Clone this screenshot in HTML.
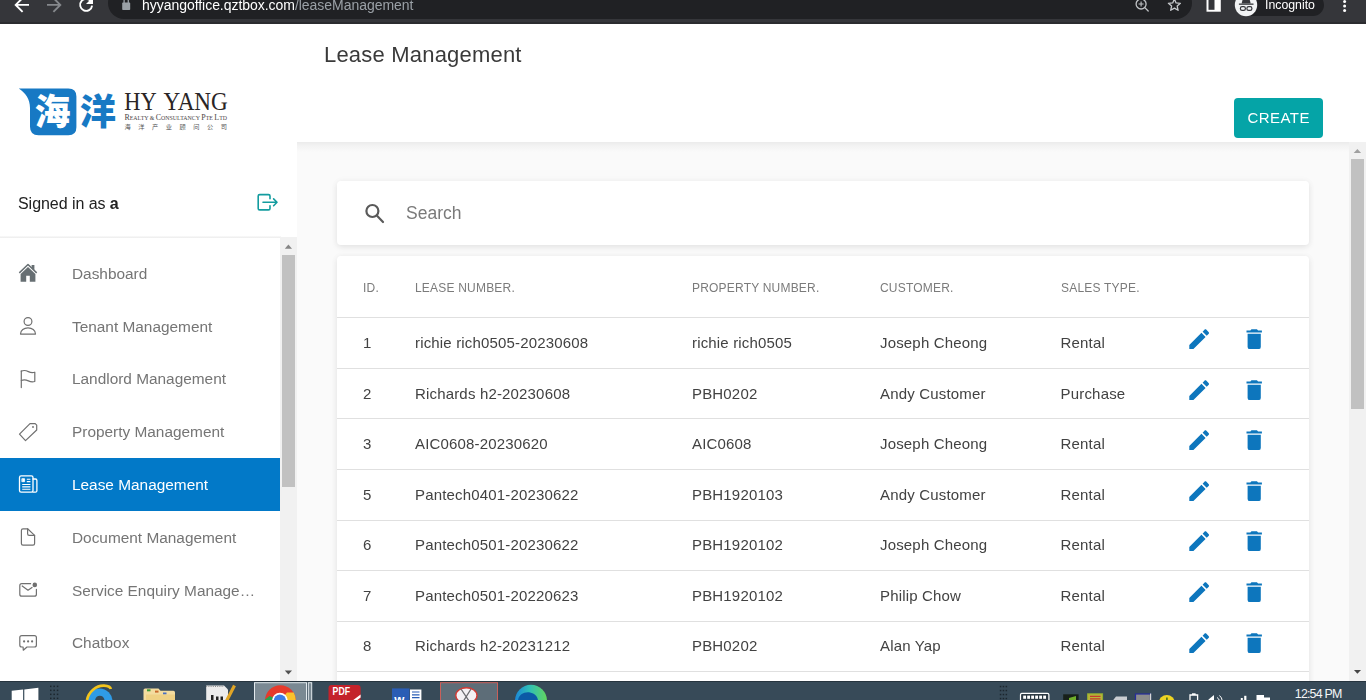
<!DOCTYPE html>
<html lang="en">
<head>
<meta charset="utf-8">
<title>Lease Management</title>
<style>
*{box-sizing:border-box;margin:0;padding:0}
html,body{width:1366px;height:700px;overflow:hidden;background:#fff;font-family:"Liberation Sans","Noto Sans CJK SC",sans-serif;}
body{position:relative}
.abs{position:absolute}
#title,#create,#signed,.nt,#searchtxt,.th,.td,#url,#incogtxt,.gs{will-change:transform}
svg{display:block;overflow:visible}
#chrome{left:0;top:0;width:1366px;height:24px;background:#35363a;border-bottom:2px solid #2b2c2f}
#urlpill{left:107.6px;top:-13.5px;width:1084px;height:32px;border-radius:16px;background:#202124}
#url{left:142px;top:-4px;font-size:14px;line-height:18px;color:#fff;white-space:nowrap;letter-spacing:-0.04px}
#url span{color:#9aa0a6}
#incog{left:1234.8px;top:-6.2px;width:89.6px;height:22.4px;border-radius:11.2px;background:#202124}
#incogtxt{left:1265px;top:-4px;font-size:12.3px;line-height:18px;color:#fff;white-space:nowrap}
#sidebar{left:0;top:23px;width:297px;height:658px;background:#fff}
#main{left:297px;top:142px;width:1069px;height:539px;background:#fafafa}
#hdrshadow{left:297px;top:141.600px;width:1052px;height:10px;background:linear-gradient(#ebebeb,#f2f2f2 35%,#fafafa)}
#title{left:324px;top:41px;font-size:22px;line-height:28px;color:#3a3a3a;white-space:nowrap;letter-spacing:0.2px}
#create{left:1234px;top:98px;width:89px;height:40px;border-radius:4px;background:#05a4a7;color:#fff;font-size:15px;line-height:40px;text-align:center;letter-spacing:0.46px;padding-left:0.4px}
#signed{left:18px;top:194px;font-size:16px;line-height:20px;color:#222;white-space:nowrap;letter-spacing:-0.05px}
#divider{left:0;top:236px;width:281px;height:2px;background:linear-gradient(#fafafa,#ececec)}
.navbg{left:0;width:280px;height:52.800px;background:#0279c8}
.nt{left:72px;font-size:15.4px;line-height:20px;color:#757575;white-space:nowrap}
.nt.on{color:#fff}
.sb{background:#f1f1f1}
.thumb{background:#c1c1c1}
.card{background:#fff;border-radius:4px;box-shadow:0 2px 6px rgba(0,0,0,.085),0 0 9px rgba(0,0,0,.03)}
#search{left:337px;top:181.300px;width:972px;height:63.400px}
#searchtxt{left:406px;top:203px;font-size:17.500px;line-height:20px;color:#7a7a7a;white-space:nowrap}
#table{left:337px;top:255.700px;width:972px;height:440px;border-radius:4px 4px 0 0}
.th{font-size:12px;line-height:16px;color:#7b7b7b;white-space:nowrap;letter-spacing:0.2px}
.rowline{left:337px;width:972px;height:1px;background:#e0e0e0}
.td{font-size:15px;line-height:20px;color:#424242;white-space:nowrap;letter-spacing:0.17px}
.ic{position:absolute}
#taskbar{left:0;top:681px;width:1366px;height:19px;background:#374a58}

</style>
</head>
<body>
<div id="main" class="abs"></div>
<div id="hdrshadow" class="abs"></div>
<div id="sidebar" class="abs"></div>
<div id="chrome" class="abs"></div>
<div id="urlpill" class="abs"></div>
<div id="url" class="abs">hyyangoffice.qztbox.com<span>/leaseManagement</span></div>
<div id="incog" class="abs"></div>
<div id="incogtxt" class="abs">Incognito</div>
<svg class="abs" style="left:0;top:0" width="1366" height="24" viewBox="0 0 1366 24" fill="none" stroke-linecap="butt" stroke-linejoin="miter">
<!-- back -->
<path d="M29 4.9H16.5M22.6 -2L15.7 4.9L22.6 11.8" stroke="#ffffff" stroke-width="1.9"/>
<!-- forward -->
<path d="M47 4.9H59.7M53.4 -2L60.3 4.9L53.4 11.8" stroke="#85888c" stroke-width="1.9"/>
<!-- reload -->
<path d="M91.2 1.6A6 6 0 1 0 92.1 5.6" stroke="#ffffff" stroke-width="1.9"/>
<path d="M93 -3V4H86Z" fill="#ffffff"/>
<!-- lock -->
<rect x="122.2" y="2.6" width="8" height="7.5" rx="0.8" fill="#9aa0a6"/>
<path d="M124.1 3V0.5A2.1 2.1 0 0 1 128.3 0.500V3" stroke="#9aa0a6" stroke-width="1.3"/>
<!-- zoom -->
<g stroke="#c0c3c6" stroke-width="1.300">
<circle cx="1141.1" cy="4" r="5"/>
<path d="M1144.8 7.6L1148.2 11" stroke-linecap="round"/>
<path d="M1138.600 4H1143.600M1141.100 1.500V6.500" stroke-width="1.100"/>
</g>
<!-- star -->
<path d="M1174.4 -1.1L1176.1 2.9L1180.4 3.3L1177.2 6.1L1178.1 10.3L1174.4 8.1L1170.7 10.3L1171.6 6.1L1168.4 3.3L1172.7 2.9Z" stroke="#c6c9cc" stroke-width="1.300" stroke-linejoin="round"/>
<!-- side panel -->
<path d="M1206.500 -4H1220.800V11.700H1206.500Z" fill="#ffffff"/>
<rect x="1208.500" y="-4" width="6" height="13.800" fill="#35363a"/>
<!-- incognito avatar -->
<circle cx="1246" cy="5" r="11.200" fill="#f1f3f4"/>
<g fill="#35363a">
<path d="M1238.900 3.500H1253.500V4.800H1238.900Z"/>
<path d="M1241.600 3.500L1243.300 -3H1249L1250.700 3.500Z"/>
</g>
<g stroke="#35363a" stroke-width="1.200">
<rect x="1240.400" y="6.700" width="5" height="3.700" rx="1.700"/>
<rect x="1246.900" y="6.700" width="5" height="3.700" rx="1.700"/>
</g>
<!-- menu dots -->
<g fill="#ffffff"><circle cx="1344.600" cy="1.400" r="1.500"/><circle cx="1344.600" cy="6" r="1.500"/><circle cx="1344.600" cy="10.600" r="1.500"/></g>
</svg>
<div id="title" class="abs">Lease Management</div>
<div id="create" class="abs">CREATE</div>
<!-- logo -->
<svg class="abs" style="left:0;top:80px" width="240" height="64" viewBox="0 80 240 64">
<path d="M18.800 88.500H68.400Q76.400 88.500 76.400 96.500V127.200Q76.400 135.200 68.400 135.200H38.500Q30 135.200 30 126.700V108C30 99 25.500 93 18.800 88.500Z" fill="#1779c4"/>
<text x="34.500" y="124.500" font-family="'Noto Sans CJK SC','WenQuanYi Zen Hei',sans-serif" font-weight="900" font-size="36" fill="#ffffff">海</text>
<text x="80" y="124.500" font-family="'Noto Sans CJK SC','WenQuanYi Zen Hei',sans-serif" font-weight="900" font-size="36" fill="#1779c4">洋</text>
<text x="124.300" y="109.700" font-family="'Liberation Serif',serif" font-size="25.300" textLength="32.400" lengthAdjust="spacingAndGlyphs" fill="#2a2526">HY</text><text x="163.500" y="109.700" font-family="'Liberation Serif',serif" font-size="25.300" textLength="64.300" lengthAdjust="spacingAndGlyphs" fill="#2a2526">YANG</text>
<text x="124.500" y="119.700" font-family="'Liberation Serif',serif" font-size="6.200" fill="#4a4546" textLength="102.500" lengthAdjust="spacingAndGlyphs"><tspan font-size="8.300">R</tspan>EALTY &amp; <tspan font-size="8.300">C</tspan>ONSULTANCY <tspan font-size="8.300">P</tspan>TE <tspan font-size="8.300">L</tspan>TD</text>
<text x="124.500" y="129.100" font-family="'Noto Sans CJK SC','WenQuanYi Zen Hei',sans-serif" font-size="6.200" letter-spacing="7.550" fill="#555">海洋产业顾问公司</text>
</svg>

<div id="signed" class="abs">Signed in as <b>a</b></div>
<div id="divider" class="abs"></div>
<div class="abs navbg" style="top:458px"></div>
<div class="abs nt" style="top:264px">Dashboard</div>
<div class="abs nt" style="top:317px">Tenant Management</div>
<div class="abs nt" style="top:369px">Landlord Management</div>
<div class="abs nt" style="top:422px">Property Management</div>
<div class="abs nt on" style="top:475px">Lease Management</div>
<div class="abs nt" style="top:528px">Document Management</div>
<div class="abs nt" style="top:581px">Service Enquiry Manage…</div>
<div class="abs nt" style="top:633px">Chatbox</div>
<div class="abs sb" style="left:280px;top:237.400px;width:17px;height:443.600px"></div>
<div class="abs thumb" style="left:282px;top:255px;width:13px;height:232.400px"></div>
<div class="abs sb" style="left:1349px;top:142px;width:17px;height:539px"></div>
<div class="abs thumb" style="left:1351px;top:159px;width:13px;height:249.600px"></div>
<svg class="abs" style="left:0;top:0" width="300" height="700" viewBox="0 0 300 700" fill="none" stroke-linecap="round" stroke-linejoin="round">
<!-- logout -->
<g stroke="#139c9f" stroke-width="1.600">
<path d="M270 198.8V196.1Q270 194.6 268.5 194.6H259.7Q258.2 194.6 258.2 196.1V208.4Q258.2 209.9 259.7 209.9H268.5Q270 209.9 270 208.4V205.8"/>
<path d="M263 202.3H276.6M273.6 198.9L277 202.3L273.6 205.7"/>
</g>
<!-- house -->
<g>
<path d="M19.3 272.9L28 264.5L36.7 272.9" stroke="#676f73" stroke-width="1.5" stroke-linecap="butt"/>
<path d="M31.6 265H34.4V270.6L31.6 268Z" fill="#676f73"/>
<path d="M28 266.9L35.4 274V281.8H29.8V275.7H26.2V281.8H20.6V274Z" fill="#676f73"/>
</g>
<!-- person -->
<g stroke="#707070" stroke-width="1.2">
<circle cx="28" cy="321.5" r="3.9"/>
<path d="M20.5 334.1C20.5 330.2 24 327.9 28 327.9C32 327.9 35.5 330.2 35.5 334.1Z"/>
</g>
<!-- flag -->
<g stroke="#707070" stroke-width="1.2">
<path d="M21.3 370.8V387.6"/>
<path d="M21.3 371.2C24 369.8 26.4 370.6 28.4 371.6C30.4 372.6 32.6 372.9 34.8 372.2V381.5C32.6 382.2 30.4 381.9 28.4 380.9C26.4 379.9 24 379.3 21.3 380.5"/>
</g>
<!-- tag -->
<g stroke="#707070" stroke-width="1.2">
<path d="M30 423.6H35.2L36.7 425.1V430L25.5 440.6L19.5 434.2Z"/>
<circle cx="33" cy="427" r="0.9" fill="#707070" stroke="none"/>
</g>
<!-- newspaper -->
<g stroke="#ffffff" stroke-width="1.3">
<rect x="19.5" y="475.9" width="13.5" height="16.3" rx="1.6"/>
<path d="M33 479H35.4Q36.9 479 36.9 480.5V490.7Q36.9 492.2 35.4 492.2H33"/>
<rect x="22.2" y="478.7" width="2.4" height="3" fill="#fff" stroke-width="0.8"/>
<path d="M26.8 479.2H30.4M26.8 481.6H30.4M22.2 484.5H30.4M22.2 486.9H30.4M22.2 489.3H30.4" stroke-width="1.1" stroke-linecap="butt"/>
</g>
<!-- file -->
<g stroke="#707070" stroke-width="1.2">
<path d="M23 528.8H27.6L34.6 535.4V543.6Q34.6 545.2 33 545.2H23Q21.4 545.2 21.4 543.6V530.4Q21.4 528.8 23 528.8Z"/>
<path d="M27.6 528.8V533.8Q27.6 535.4 29.2 535.4H34.6" />
</g>
<!-- envelope -->
<g stroke="#707070" stroke-width="1.2">
<path d="M30.6 583.7H21.8Q19.8 583.7 19.8 585.7V594.2Q19.8 596.2 21.8 596.2H34.4Q36.4 596.2 36.4 594.2V589.4"/>
<path d="M22.2 586L28 590.2L32 587.4"/>
<circle cx="34.8" cy="584.9" r="2.3" fill="#707070" stroke="none"/>
</g>
<!-- chat -->
<g stroke="#707070" stroke-width="1.2">
<path d="M21.8 635.6H34.4Q36.4 635.6 36.4 637.6V645Q36.4 647 34.4 647H27L23.3 650.2L23.1 647H21.8Q19.8 647 19.8 645V637.6Q19.8 635.6 21.8 635.6Z"/>
<g fill="#707070" stroke="none"><circle cx="24.1" cy="641.4" r="1.1"/><circle cx="28.1" cy="641.4" r="1.1"/><circle cx="32.1" cy="641.4" r="1.1"/></g>
</g>
<!-- scrollbar arrows -->
<path d="M284.800 248.800L288.400 244.600L292 248.800Z" fill="#858585" stroke="none"/>
<path d="M284.800 670.400L288.400 674.600L292 670.400Z" fill="#505050" stroke="none"/>
</svg>
<svg class="abs" style="left:1349px;top:141px" width="17" height="540" viewBox="0 0 17 540"><path d="M4.700 12L8.400 7.900L12.100 12Z" fill="#a0a0a0"/><path d="M5 529L8.400 532.800L12 529Z" fill="#454545"/></svg>


<div id="search" class="abs card"></div>
<svg class="abs" style="left:360px;top:199px" width="28" height="28" viewBox="0 0 28 28"><circle cx="12.4" cy="12" r="6" fill="none" stroke="#5a5a5a" stroke-width="2.2"/><path d="M16.8 16.6L23 23" stroke="#5a5a5a" stroke-width="2.2" stroke-linecap="round"/></svg>
<div id="searchtxt" class="abs">Search</div>
<div id="table" class="abs card"></div>
<div class="abs th" style="left:363px;top:280px">ID.</div>
<div class="abs th" style="left:415px;top:280px">LEASE NUMBER.</div>
<div class="abs th" style="left:692px;top:280px">PROPERTY NUMBER.</div>
<div class="abs th" style="left:880px;top:280px">CUSTOMER.</div>
<div class="abs th" style="left:1061px;top:280px">SALES TYPE.</div>
<div class="abs rowline" style="top:317px"></div>
<div class="abs td" style="left:363px;top:333px">1</div>
<div class="abs td" style="left:415px;top:333px">richie rich0505-20230608</div>
<div class="abs td" style="left:692px;top:333px">richie rich0505</div>
<div class="abs td" style="left:880px;top:333px">Joseph Cheong</div>
<div class="abs td" style="left:1060px;top:333px;padding-left:0.6px">Rental</div>
<svg class="ic" style="left:1186px;top:326.4px" width="26.4" height="26.4" viewBox="0 0 24 24"><path fill="#0d76bd" d="M20.71,7.04C21.1,6.65 21.1,6 20.71,5.63L18.37,3.29C18,2.9 17.35,2.9 16.96,3.29L15.12,5.12L18.87,8.87M3,17.25V21H6.75L17.81,9.93L14.06,6.18L3,17.25Z"/></svg>
<svg class="ic" style="left:1241.4px;top:326.4px" width="26.4" height="26.4" viewBox="0 0 24 24"><path fill="#0d76bd" d="M19,4H15.5L14.5,3H9.5L8.5,4H5V6H19M6,19A2,2 0 0,0 8,21H16A2,2 0 0,0 18,19V7H6V19Z"/></svg>
<div class="abs rowline" style="top:368px"></div>
<div class="abs td" style="left:363px;top:384px">2</div>
<div class="abs td" style="left:415px;top:384px">Richards h2-20230608</div>
<div class="abs td" style="left:692px;top:384px">PBH0202</div>
<div class="abs td" style="left:880px;top:384px">Andy Customer</div>
<div class="abs td" style="left:1060px;top:384px;padding-left:0.6px">Purchase</div>
<svg class="ic" style="left:1186px;top:377.4px" width="26.4" height="26.4" viewBox="0 0 24 24"><path fill="#0d76bd" d="M20.71,7.04C21.1,6.65 21.1,6 20.71,5.63L18.37,3.29C18,2.9 17.35,2.9 16.96,3.29L15.12,5.12L18.87,8.87M3,17.25V21H6.75L17.81,9.93L14.06,6.18L3,17.25Z"/></svg>
<svg class="ic" style="left:1241.4px;top:377.4px" width="26.4" height="26.4" viewBox="0 0 24 24"><path fill="#0d76bd" d="M19,4H15.5L14.5,3H9.5L8.5,4H5V6H19M6,19A2,2 0 0,0 8,21H16A2,2 0 0,0 18,19V7H6V19Z"/></svg>
<div class="abs rowline" style="top:418px"></div>
<div class="abs td" style="left:363px;top:434px">3</div>
<div class="abs td" style="left:415px;top:434px">AIC0608-20230620</div>
<div class="abs td" style="left:692px;top:434px">AIC0608</div>
<div class="abs td" style="left:880px;top:434px">Joseph Cheong</div>
<div class="abs td" style="left:1060px;top:434px;padding-left:0.6px">Rental</div>
<svg class="ic" style="left:1186px;top:427.4px" width="26.4" height="26.4" viewBox="0 0 24 24"><path fill="#0d76bd" d="M20.71,7.04C21.1,6.65 21.1,6 20.71,5.63L18.37,3.29C18,2.9 17.35,2.9 16.96,3.29L15.12,5.12L18.87,8.87M3,17.25V21H6.75L17.81,9.93L14.06,6.18L3,17.25Z"/></svg>
<svg class="ic" style="left:1241.4px;top:427.4px" width="26.4" height="26.4" viewBox="0 0 24 24"><path fill="#0d76bd" d="M19,4H15.5L14.5,3H9.5L8.5,4H5V6H19M6,19A2,2 0 0,0 8,21H16A2,2 0 0,0 18,19V7H6V19Z"/></svg>
<div class="abs rowline" style="top:469px"></div>
<div class="abs td" style="left:363px;top:485px">5</div>
<div class="abs td" style="left:415px;top:485px">Pantech0401-20230622</div>
<div class="abs td" style="left:692px;top:485px">PBH1920103</div>
<div class="abs td" style="left:880px;top:485px">Andy Customer</div>
<div class="abs td" style="left:1060px;top:485px;padding-left:0.6px">Rental</div>
<svg class="ic" style="left:1186px;top:478.4px" width="26.4" height="26.4" viewBox="0 0 24 24"><path fill="#0d76bd" d="M20.71,7.04C21.1,6.65 21.1,6 20.71,5.63L18.37,3.29C18,2.9 17.35,2.9 16.96,3.29L15.12,5.12L18.87,8.87M3,17.25V21H6.75L17.81,9.93L14.06,6.18L3,17.25Z"/></svg>
<svg class="ic" style="left:1241.4px;top:478.4px" width="26.4" height="26.4" viewBox="0 0 24 24"><path fill="#0d76bd" d="M19,4H15.5L14.5,3H9.5L8.5,4H5V6H19M6,19A2,2 0 0,0 8,21H16A2,2 0 0,0 18,19V7H6V19Z"/></svg>
<div class="abs rowline" style="top:520px"></div>
<div class="abs td" style="left:363px;top:535px">6</div>
<div class="abs td" style="left:415px;top:535px">Pantech0501-20230622</div>
<div class="abs td" style="left:692px;top:535px">PBH1920102</div>
<div class="abs td" style="left:880px;top:535px">Joseph Cheong</div>
<div class="abs td" style="left:1060px;top:535px;padding-left:0.6px">Rental</div>
<svg class="ic" style="left:1186px;top:528.4px" width="26.4" height="26.4" viewBox="0 0 24 24"><path fill="#0d76bd" d="M20.71,7.04C21.1,6.65 21.1,6 20.71,5.63L18.37,3.29C18,2.9 17.35,2.9 16.96,3.29L15.12,5.12L18.87,8.87M3,17.25V21H6.75L17.81,9.93L14.06,6.18L3,17.25Z"/></svg>
<svg class="ic" style="left:1241.4px;top:528.4px" width="26.4" height="26.4" viewBox="0 0 24 24"><path fill="#0d76bd" d="M19,4H15.5L14.5,3H9.5L8.5,4H5V6H19M6,19A2,2 0 0,0 8,21H16A2,2 0 0,0 18,19V7H6V19Z"/></svg>
<div class="abs rowline" style="top:570px"></div>
<div class="abs td" style="left:363px;top:586px">7</div>
<div class="abs td" style="left:415px;top:586px">Pantech0501-20220623</div>
<div class="abs td" style="left:692px;top:586px">PBH1920102</div>
<div class="abs td" style="left:880px;top:586px">Philip Chow</div>
<div class="abs td" style="left:1060px;top:586px;padding-left:0.6px">Rental</div>
<svg class="ic" style="left:1186px;top:579.4px" width="26.4" height="26.4" viewBox="0 0 24 24"><path fill="#0d76bd" d="M20.71,7.04C21.1,6.65 21.1,6 20.71,5.63L18.37,3.29C18,2.9 17.35,2.9 16.96,3.29L15.12,5.12L18.87,8.87M3,17.25V21H6.75L17.81,9.93L14.06,6.18L3,17.25Z"/></svg>
<svg class="ic" style="left:1241.4px;top:579.4px" width="26.4" height="26.4" viewBox="0 0 24 24"><path fill="#0d76bd" d="M19,4H15.5L14.5,3H9.5L8.5,4H5V6H19M6,19A2,2 0 0,0 8,21H16A2,2 0 0,0 18,19V7H6V19Z"/></svg>
<div class="abs rowline" style="top:621px"></div>
<div class="abs td" style="left:363px;top:636px">8</div>
<div class="abs td" style="left:415px;top:636px">Richards h2-20231212</div>
<div class="abs td" style="left:692px;top:636px">PBH0202</div>
<div class="abs td" style="left:880px;top:636px">Alan Yap</div>
<div class="abs td" style="left:1060px;top:636px;padding-left:0.6px">Rental</div>
<svg class="ic" style="left:1186px;top:630.2px" width="26.4" height="26.4" viewBox="0 0 24 24"><path fill="#0d76bd" d="M20.71,7.04C21.1,6.65 21.1,6 20.71,5.63L18.37,3.29C18,2.9 17.35,2.9 16.96,3.29L15.12,5.12L18.87,8.87M3,17.25V21H6.75L17.81,9.93L14.06,6.18L3,17.25Z"/></svg>
<svg class="ic" style="left:1241.4px;top:630.2px" width="26.4" height="26.4" viewBox="0 0 24 24"><path fill="#0d76bd" d="M19,4H15.5L14.5,3H9.5L8.5,4H5V6H19M6,19A2,2 0 0,0 8,21H16A2,2 0 0,0 18,19V7H6V19Z"/></svg>
<div class="abs rowline" style="top:671px"></div>

<div id="taskbar" class="abs"></div><div class="abs" style="left:0;top:681px;width:1366px;height:1px;background:#26343e"></div>
<svg class="abs" style="left:0;top:681px" width="1366" height="19" viewBox="0 681 1366 19">
<defs>
<linearGradient id="edgeg" x1="0" y1="0" x2="1" y2="0"><stop offset="0" stop-color="#1b86d8"/><stop offset="0.45" stop-color="#2fbfb6"/><stop offset="1" stop-color="#63d65e"/></linearGradient>
<clipPath id="tbclip"><rect x="0" y="681" width="1366" height="19"/></clipPath>
</defs>
<g clip-path="url(#tbclip)">
<!-- windows logo -->
<path d="M11.700 690.700L23.100 689.500V701H11.700Z" fill="#ffffff"/>
<path d="M24.300 689.400L38.400 687.700V701H24.300Z" fill="#ffffff"/>
<!-- grip dots -->
<g fill="#1c262e">
<rect x="50" y="685.600" width="1.500" height="1.500"/><rect x="53.400" y="685.600" width="1.500" height="1.500"/><rect x="56.800" y="685.600" width="1.500" height="1.500"/>
<rect x="50" y="689.600" width="1.500" height="1.500"/><rect x="53.400" y="689.600" width="1.500" height="1.500"/><rect x="56.800" y="689.600" width="1.500" height="1.500"/>
<rect x="50" y="693.600" width="1.500" height="1.500"/><rect x="53.400" y="693.600" width="1.500" height="1.500"/><rect x="56.800" y="693.600" width="1.500" height="1.500"/>
<rect x="50" y="697.600" width="1.500" height="1.500"/><rect x="53.400" y="697.600" width="1.500" height="1.500"/><rect x="56.800" y="697.600" width="1.500" height="1.500"/>
<rect x="999.800" y="685.800" width="1.500" height="1.500"/><rect x="1002.700" y="685.800" width="1.500" height="1.500"/><rect x="1005.600" y="685.800" width="1.500" height="1.500"/>
<rect x="999.800" y="689.800" width="1.500" height="1.500"/><rect x="1002.700" y="689.800" width="1.500" height="1.500"/><rect x="1005.600" y="689.800" width="1.500" height="1.500"/>
<rect x="999.800" y="693.800" width="1.500" height="1.500"/><rect x="1002.700" y="693.800" width="1.500" height="1.500"/><rect x="1005.600" y="693.800" width="1.500" height="1.500"/>
<rect x="999.800" y="697.800" width="1.500" height="1.500"/><rect x="1002.700" y="697.800" width="1.500" height="1.500"/><rect x="1005.600" y="697.800" width="1.500" height="1.500"/>
</g>
<!-- IE -->
<circle cx="99.500" cy="701.500" r="13" fill="#2f9be6"/>
<path d="M95 701C95 697.600 97.300 695.800 99.800 695.800C102.400 695.800 104.600 697.600 104.600 701Z" fill="#374a58"/>
<path d="M87 700C88.500 692 96 685.300 104 685.600C108 685.800 110.500 687.200 110.800 689" fill="none" stroke="#f3c41c" stroke-width="2.700"/>
<!-- folder -->
<path d="M143.500 690Q143.500 688.400 145.100 688.400H158.500L160.500 690.800H173.400Q175 690.800 175 692.400V701H143.500Z" fill="#f3dc9f"/>
<rect x="147" y="689.300" width="3.500" height="2" fill="#3d9b35"/><rect x="155" y="690.600" width="3.500" height="2" fill="#c96a2b"/><rect x="163" y="692.500" width="3.500" height="2" fill="#4a6fc2"/>
<path d="M146 694.500H175V701H146Z" fill="#efd184"/>
<!-- notepad++ -->
<path d="M206.200 685.600H224L228 689.500V701H206.200Z" fill="#ececec"/>
<path d="M206.200 686.500H224" stroke="#8a8a8a" stroke-width="1" stroke-dasharray="1 1.200"/>
<path d="M211 695H213.500V701H211ZM216 696.500H218.500V701H216ZM220.500 696.500H223V701H220.500Z" fill="#222"/>
<path d="M234.500 685.500L226.500 701" stroke="#e0a526" stroke-width="3.200"/>
<!-- chrome tile -->
<rect x="254.500" y="682.700" width="52" height="20" fill="#7a8993" stroke="#e2e9ed" stroke-width="1"/>
<rect x="308.300" y="682.700" width="3.400" height="20" fill="#7a8993" stroke="#e2e9ed" stroke-width="1"/>
<circle cx="280.400" cy="700.600" r="15.400" fill="#e53a2c"/>
<path d="M280.400 700.600L269.500 696L262 702H280Z" fill="#2ba24c"/>
<path d="M280.400 700.600L287 692.600H293.700Q295.800 696.500 295.800 701H280Z" fill="#f9c22c"/>
<circle cx="279.900" cy="700.600" r="7.800" fill="#ffffff"/>
<circle cx="279.900" cy="700.600" r="6.100" fill="#3b7de6"/>
<!-- PDF -->
<path d="M328.500 688Q328.500 685 331.500 685H357.600Q360.600 685 360.600 688V701H328.500Z" fill="#c4222b"/>
<path d="M352 701L360.600 694.500V697.500L356 701Z" fill="#ffffff"/>
<text x="332.600" y="694.700" font-family="'Liberation Sans',sans-serif" font-weight="700" font-size="10" fill="#ffffff" textLength="17.400" lengthAdjust="spacingAndGlyphs">PDF</text>
<!-- word -->
<rect x="392" y="688.400" width="17.500" height="13" fill="#2a5db5"/>
<rect x="410" y="689.500" width="11.400" height="12" fill="#ffffff"/>
<path d="M412 692H419.500M412 694.800H419.500M412 697.600H419.500" stroke="#2a5db5" stroke-width="1.200"/>
<text x="394.300" y="704" font-family="'Liberation Sans',sans-serif" font-weight="700" font-size="13" fill="#ffffff">w</text>
<!-- snipping tile -->
<rect x="440.500" y="682.700" width="57" height="20" fill="#5d6d78" stroke="#c8605a" stroke-width="1"/>
<ellipse cx="466.400" cy="695.500" rx="10.600" ry="7.800" fill="#f3f0f4" stroke="#d23a34" stroke-width="1.400"/>
<path d="M461 689L469 701M471 689L463.500 701" stroke="#6b6b70" stroke-width="1.300"/>
<!-- edge -->
<circle cx="531" cy="700.800" r="16" fill="url(#edgeg)"/>
<path d="M518 701C518 695 524 691.500 530 692.500C535 693.400 538 697 538 701Z" fill="#0c5aa6"/>
<!-- keyboard -->
<rect x="1020.500" y="693.300" width="28.400" height="10" rx="1.500" fill="#2d3a44" stroke="#ffffff" stroke-width="1.200"/>
<g fill="#ffffff"><rect x="1023.200" y="695.600" width="2.800" height="3.200"/><rect x="1027.200" y="695.600" width="2.800" height="3.200"/><rect x="1031.200" y="695.600" width="2.800" height="3.200"/><rect x="1035.200" y="695.600" width="2.800" height="3.200"/><rect x="1039.200" y="695.600" width="2.800" height="3.200"/><rect x="1043.200" y="695.600" width="2.800" height="3.200"/></g>
<!-- tray -->
<rect x="1063.200" y="694.300" width="15.400" height="7" fill="#17201a"/><path d="M1069 698L1076 696V701H1069Z" fill="#6fae2a"/>
<rect x="1087.600" y="693.800" width="15" height="8" fill="#b9b23a" stroke="#8fae2e" stroke-width="1"/><path d="M1090 696.300H1100.500M1090 698.800H1100.500" stroke="#c23b2e" stroke-width="1.200"/>
<path d="M1112.500 701L1116 696.500H1127V701Z" fill="#c9cdd1"/>
<rect x="1135.500" y="694" width="15" height="8" fill="#8c8c8c" stroke="#262c9c" stroke-width="1.200"/><rect x="1150" y="693.500" width="1.200" height="8" fill="#d8d8d8"/>
<circle cx="1166.800" cy="703" r="8" fill="#eed422"/><rect x="1166" y="697.500" width="1.800" height="3" fill="#5a7a1a"/>
<path d="M1190 695H1197.600V701H1190Z" fill="none" stroke="#ffffff" stroke-width="1.300"/><rect x="1192" y="693.300" width="3.600" height="1.700" fill="#ffffff"/>
<path d="M1208.500 699.500L1214 695V701H1208.500Z" fill="#ffffff"/><path d="M1217 697.500Q1219 698.500 1219.500 701M1219.500 695.500Q1222 697.500 1222.300 701" stroke="#ffffff" stroke-width="1" fill="none"/>
<rect x="1240.800" y="698" width="2" height="3" fill="#ffffff"/><rect x="1244.200" y="695.800" width="2.200" height="5.200" fill="#ffffff"/>
<path d="M1256.500 695H1264V701H1256.500Z" fill="#ffffff"/><path d="M1264 697.500H1270V701H1264Z" fill="#ffffff"/>
</g>
</svg>
<div class="abs" style="left:1294.800px;top:686px;font-size:12.400px;line-height:16px;color:#f4f6f7;white-space:nowrap;letter-spacing:-0.800px">12:54 PM</div>

</body>
</html>
